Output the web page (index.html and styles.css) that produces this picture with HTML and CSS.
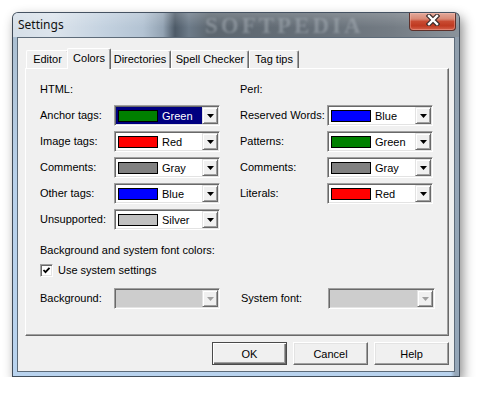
FILE: index.html
```html
<!DOCTYPE html>
<html>
<head>
<meta charset="utf-8">
<title>Settings</title>
<link rel="stylesheet" href="styles.css">
</head>
<body>
<div class="window">
  <div class="titlebar">
    <span class="title">Settings</span>
    <span class="watermark">SOFTPEDIA</span>
    <div class="close">
      <svg width="14" height="12" viewBox="0 0 14 12">
        <path d="M3 2 L11 10 M11 2 L3 10" stroke="#3b2b2b" stroke-width="4.6" stroke-linecap="square" fill="none"/>
        <path d="M3 2 L11 10 M11 2 L3 10" stroke="#ffffff" stroke-width="2.4" stroke-linecap="square" fill="none"/>
      </svg>
    </div>
  </div>
  <div class="client">
    <div class="tabs">
      <div class="tab t-editor">Editor</div>
      <div class="tab t-colors active">Colors</div>
      <div class="tab t-dirs">Directories</div>
      <div class="tab t-spell">Spell Checker</div>
      <div class="tab t-tips">Tag tips</div>
    </div>
    <div class="panel">
      <div class="cols">
        <div class="col col-html">
          <div class="head">HTML:</div>
          <div class="grid">
            <span class="lbl">Anchor tags:</span>
            <div class="combo">
              <div class="val selected"><span class="sw green"></span><span>Green</span></div>
              <div class="drop"><svg width="7" height="4" viewBox="0 0 7 4"><polygon points="0,0 7,0 3.5,4" fill="#000"/></svg></div>
            </div>
            <span class="lbl">Image tags:</span>
            <div class="combo">
              <div class="val"><span class="sw red"></span><span>Red</span></div>
              <div class="drop"><svg width="7" height="4" viewBox="0 0 7 4"><polygon points="0,0 7,0 3.5,4" fill="#000"/></svg></div>
            </div>
            <span class="lbl">Comments:</span>
            <div class="combo">
              <div class="val"><span class="sw gray"></span><span>Gray</span></div>
              <div class="drop"><svg width="7" height="4" viewBox="0 0 7 4"><polygon points="0,0 7,0 3.5,4" fill="#000"/></svg></div>
            </div>
            <span class="lbl">Other tags:</span>
            <div class="combo">
              <div class="val"><span class="sw blue"></span><span>Blue</span></div>
              <div class="drop"><svg width="7" height="4" viewBox="0 0 7 4"><polygon points="0,0 7,0 3.5,4" fill="#000"/></svg></div>
            </div>
            <span class="lbl">Unsupported:</span>
            <div class="combo">
              <div class="val"><span class="sw silver"></span><span>Silver</span></div>
              <div class="drop"><svg width="7" height="4" viewBox="0 0 7 4"><polygon points="0,0 7,0 3.5,4" fill="#000"/></svg></div>
            </div>
          </div>
        </div>
        <div class="col col-perl">
          <div class="head">Perl:</div>
          <div class="grid">
            <span class="lbl">Reserved Words:</span>
            <div class="combo">
              <div class="val"><span class="sw blue"></span><span>Blue</span></div>
              <div class="drop"><svg width="7" height="4" viewBox="0 0 7 4"><polygon points="0,0 7,0 3.5,4" fill="#000"/></svg></div>
            </div>
            <span class="lbl">Patterns:</span>
            <div class="combo">
              <div class="val"><span class="sw green"></span><span>Green</span></div>
              <div class="drop"><svg width="7" height="4" viewBox="0 0 7 4"><polygon points="0,0 7,0 3.5,4" fill="#000"/></svg></div>
            </div>
            <span class="lbl">Comments:</span>
            <div class="combo">
              <div class="val"><span class="sw gray"></span><span>Gray</span></div>
              <div class="drop"><svg width="7" height="4" viewBox="0 0 7 4"><polygon points="0,0 7,0 3.5,4" fill="#000"/></svg></div>
            </div>
            <span class="lbl">Literals:</span>
            <div class="combo">
              <div class="val"><span class="sw red"></span><span>Red</span></div>
              <div class="drop"><svg width="7" height="4" viewBox="0 0 7 4"><polygon points="0,0 7,0 3.5,4" fill="#000"/></svg></div>
            </div>
          </div>
        </div>
      </div>
      <div class="sys">
        <div class="sys-head">Background and system font colors:</div>
        <div class="check-row">
          <span class="checkbox"><svg width="9" height="9" viewBox="0 0 9 9"><polyline points="1.5,4 3.5,6.2 7.5,1.8" fill="none" stroke="#000" stroke-width="1.8"/></svg></span>
          <span>Use system settings</span>
        </div>
        <div class="sys-row">
          <span class="lbl lbl-bg">Background:</span>
          <div class="combo disabled">
            <div class="val"></div>
            <div class="drop"><svg width="7" height="4" viewBox="0 0 7 4"><polygon points="0,0 7,0 3.5,4" fill="#a0a0a0"/></svg></div>
          </div>
          <span class="lbl lbl-sf">System font:</span>
          <div class="combo disabled">
            <div class="val"></div>
            <div class="drop"><svg width="7" height="4" viewBox="0 0 7 4"><polygon points="0,0 7,0 3.5,4" fill="#a0a0a0"/></svg></div>
          </div>
        </div>
      </div>
    </div>
    <div class="buttons">
      <button class="pb default">OK</button>
      <button class="pb">Cancel</button>
      <button class="pb">Help</button>
    </div>
  </div>
</div>
</body>
</html>
```

FILE: styles.css
```css
* { box-sizing: border-box; }
html, body { margin: 0; padding: 0; background: #ffffff; }
body {
  font-family: "Liberation Sans", Arial, sans-serif;
  font-size: 11px;
  color: #000;
}

.window {
  margin: 12px 0 0 12px;
  width: 448px;
  height: 365px;
  display: flex;
  flex-direction: column;
  border: 1px solid rgba(40, 50, 62, 0.8);
  border-radius: 6px 6px 0 0;
  background:
    linear-gradient(to right, rgba(120,130,140,0) 0, rgba(120,130,140,0) 438px, rgba(120,130,140,0.55) 442px),
    linear-gradient(to bottom, #a9bccd 0, #b9d1ea 45%, #b9d3ee 100%);
  box-shadow: 3px 5px 12px rgba(0, 0, 0, 0.45);
}

.titlebar {
  position: relative;
  height: 24px;
  display: flex;
  align-items: flex-start;
  padding-left: 5px;
  overflow: hidden;
  border-radius: 5px 5px 0 0;
  background:
    linear-gradient(to bottom, rgba(255,255,255,0.18) 0, rgba(255,255,255,0) 60%),
    linear-gradient(to right, #d6dfe8 0, #dce4ec 40px, #c4d2e0 90px, #b3c3d3 130px, #93a3b3 150px, #4d5a67 162px, #6d7b89 176px, #5c666f 196px, #666f78 300px, #747c84 380px, #8a939b 446px);
}
.title {
  position: relative;
  z-index: 1;
  font-family: "Noto Sans", "Open Sans", sans-serif;
  font-size: 12px;
  line-height: 24px;
  color: #111;
}
.watermark {
  position: absolute;
  left: 192px;
  top: 1px;
  font-family: "Liberation Serif", serif;
  font-weight: bold;
  font-size: 23px;
  line-height: 23px;
  letter-spacing: 3px;
  color: rgba(170, 178, 186, 0.5);
  filter: blur(1.1px);
}
.close {
  position: relative;
  z-index: 1;
  margin-left: auto;
  margin-right: 3px;
  width: 47px;
  height: 18px;
  display: flex;
  align-items: center;
  justify-content: center;
  padding-bottom: 3px;
  border: 1px solid #5e302a;
  border-top: none;
  border-radius: 0 0 4px 4px;
  background: linear-gradient(to bottom, #e2a99b 0, #d98976 35%, #c84a31 50%, #bf3a21 75%, #d4604a 100%);
  box-shadow: inset 0 0 0 1px rgba(255, 200, 190, 0.35);
}

.client {
  flex: 1;
  margin: 0 4px 4px 4px;
  border: 1px solid #5d6b79;
  background: #f0f0f0;
  padding: 10px 5px 6px 7px;
  display: flex;
  flex-direction: column;
}

.tabs {
  display: flex;
  height: 20px;
  padding-left: 1px;
}
.tab {
  height: 18px;
  margin-top: 2px;
  text-align: center;
  line-height: 17px;
  border-top: 1px solid #ffffff;
  border-left: 1px solid #ffffff;
  border-right: 1px solid #696969;
  box-shadow: inset -1px 0 0 #a0a0a0;
  border-radius: 2px 2px 0 0;
  background: #f0f0f0;
  white-space: nowrap;
}
.t-editor { width: 43px; }
.t-colors { width: 40px; }
.t-dirs { width: 62px; }
.t-spell { width: 78px; }
.t-tips { width: 50px; }
.tab.active {
  position: relative;
  z-index: 2;
  width: 44px;
  height: 21px;
  margin: 0 -2px -1px -2px;
  line-height: 18px;
}

.panel {
  height: 268px;
  border-top: 1px solid #ffffff;
  border-left: 1px solid #ffffff;
  border-right: 1px solid #696969;
  border-bottom: 1px solid #696969;
  box-shadow: inset -1px -1px 0 #a0a0a0;
  padding: 14px 0 0 14px;
}

.cols {
  display: flex;
  gap: 20px;
}
.head {
  height: 13px;
  line-height: 13px;
  margin-bottom: 9px;
}
.grid {
  display: grid;
  grid-template-columns: 74px 106px;
  grid-auto-rows: 21px;
  row-gap: 5px;
  align-items: center;
}
.col-perl .grid { grid-template-columns: 87px 106px; }
.lbl { line-height: 13px; white-space: nowrap; }

.combo {
  width: 106px;
  height: 21px;
  display: flex;
  padding: 1px;
  border: 1px solid;
  border-color: #a0a0a0 #ffffff #ffffff #a0a0a0;
  box-shadow: inset 1px 1px 0 #696969, inset -1px -1px 0 #e3e3e3;
  background: #ffffff;
}
.val {
  flex: 1;
  display: flex;
  align-items: center;
  gap: 4px;
  padding-left: 2px;
  white-space: nowrap;
}
.val.selected { background: #000080; color: #ffffff; }
.sw {
  width: 40px;
  height: 12px;
  border: 1px solid #000;
  flex: none;
}
.sw.green { background: #008000; }
.sw.red { background: #ff0000; }
.sw.gray { background: #808080; }
.sw.blue { background: #0000ff; }
.sw.silver { background: #c0c0c0; }

.drop {
  width: 16px;
  height: 17px;
  display: flex;
  align-items: center;
  justify-content: center;
  background: #f0f0f0;
  border: 1px solid;
  border-color: #e3e3e3 #696969 #696969 #e3e3e3;
  box-shadow: inset 1px 1px 0 #ffffff, inset -1px -1px 0 #a0a0a0;
}
.drop svg { display: block; }

.combo.disabled { background: #f0f0f0; }
.combo.disabled .val { background: #cdcdcd; }

.sys { margin-top: 14px; }
.sys-head { height: 13px; line-height: 13px; }
.check-row {
  margin-top: 7px;
  height: 13px;
  display: flex;
  align-items: center;
  gap: 5px;
  line-height: 13px;
}
.checkbox {
  width: 13px;
  height: 13px;
  display: flex;
  align-items: center;
  justify-content: center;
  border: 1px solid;
  border-color: #a0a0a0 #ffffff #ffffff #a0a0a0;
  box-shadow: inset 1px 1px 0 #696969, inset -1px -1px 0 #e3e3e3;
  background: #ffffff;
}
.checkbox svg { display: block; }
.sys-row {
  margin-top: 11px;
  display: flex;
  align-items: center;
  height: 21px;
}
.lbl-bg { width: 74px; }
.lbl-sf { width: 87px; margin-left: 21px; }
.sys-row .combo.disabled:last-child { width: 107px; }

.buttons {
  display: flex;
  justify-content: flex-end;
  gap: 6px;
  margin-top: 6px;
}
.pb {
  -webkit-appearance: none;
  appearance: none;
  width: 75px;
  height: 23px;
  margin: 0;
  padding: 0;
  font-family: inherit;
  font-size: 11px;
  color: #000;
  background: #f0f0f0;
  border: 1px solid;
  border-color: #ffffff #696969 #696969 #ffffff;
  box-shadow: inset -1px -1px 0 #a0a0a0, inset 1px 1px 0 #e3e3e3;
  border-radius: 0;
}
.pb.default {
  border: 1px solid #4a4a4a;
  box-shadow: inset 1px 1px 0 #ffffff, inset -1px -1px 0 #696969, inset -2px -2px 0 #a0a0a0;
}
```
